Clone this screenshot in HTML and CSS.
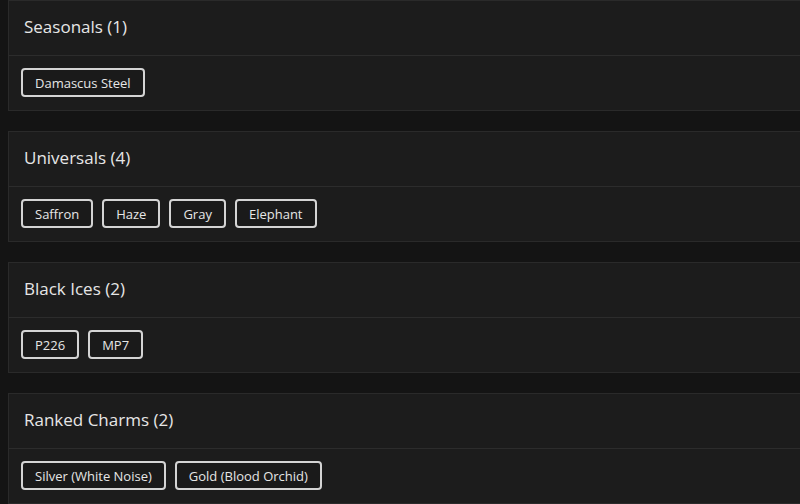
FILE: index.html
```html
<!DOCTYPE html>
<html lang="en">
<head>
    <meta charset="UTF-8">
    <meta name="viewport" content="width=device-width, initial-scale=1.0">
    <title>Collection</title>
    <link rel="stylesheet" href="styles.css">
</head>
<body>
    <div class="list">
        <section class="group">
            <h2 class="group-title">Seasonals (1)</h2>
            <div class="tags">
                <span class="tag">Damascus Steel</span>
            </div>
        </section>
        <section class="group">
            <h2 class="group-title">Universals (4)</h2>
            <div class="tags">
                <span class="tag">Saffron</span>
                <span class="tag">Haze</span>
                <span class="tag">Gray</span>
                <span class="tag">Elephant</span>
            </div>
        </section>
        <section class="group">
            <h2 class="group-title">Black Ices (2)</h2>
            <div class="tags">
                <span class="tag">P226</span>
                <span class="tag">MP7</span>
            </div>
        </section>
        <section class="group">
            <h2 class="group-title">Ranked Charms (2)</h2>
            <div class="tags">
                <span class="tag">Silver (White Noise)</span>
                <span class="tag">Gold (Blood Orchid)</span>
            </div>
        </section>
    </div>
</body>
</html>
```

FILE: styles.css
```css
body {
    margin: 0;
    font-family: "Open Sans", Arial, sans-serif;
    background-color: #141414;
    color: #e6e6e6;
    overflow: hidden;
}

.list {
    display: flex;
    flex-direction: column;
    gap: 20px;
    padding-left: 8px;
    width: 830px;
}

.group {
    background: #1c1c1c;
    border: 1px solid #2a2a2a;
}

.group-title {
    margin: 0;
    height: 51px;
    display: flex;
    align-items: center;
    padding: 0 15px 3px;
    font-size: 17px;
    font-weight: 500;
    border-bottom: 1px solid #2c2c2c;
}

.tags {
    display: flex;
    gap: 9px;
    padding: 12px 12px 13px;
    height: 29px;
    align-items: center;
}

.tag {
    display: inline-flex;
    align-items: center;
    height: 29px;
    box-sizing: border-box;
    padding: 0 12px;
    border: 2px solid #d4d4d4;
    border-radius: 4px;
    background: #1a1a1a;
    font-size: 13px;
    font-weight: 500;
    color: #e6e6e6;
}
```
